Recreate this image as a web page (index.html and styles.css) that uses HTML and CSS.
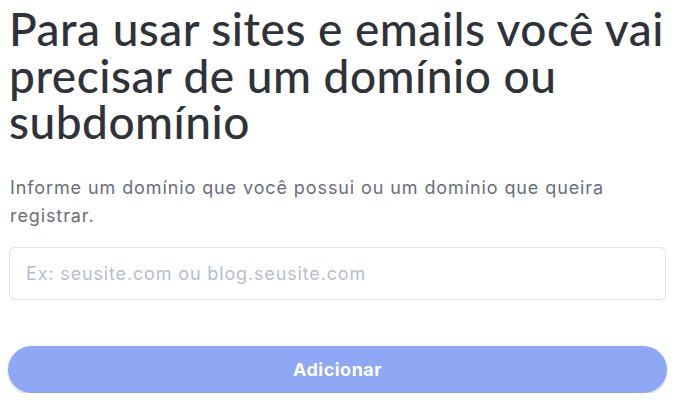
FILE: index.html
```html
<!DOCTYPE html>
<html lang="pt-BR">
<head>
<meta charset="utf-8">
<link rel="stylesheet" href="styles.css">
</head>
<body>
<main class="panel">
  <h1 class="title">Para usar sites e emails você vai precisar de um domínio ou subdomínio</h1>
  <p class="lead">Informe um domínio que você possui ou um domínio que queira registrar.</p>
  <input class="field" type="text" placeholder="Ex: seusite.com ou blog.seusite.com">
  <button class="btn" type="button">Adicionar</button>
</main>
</body>
</html>
```
FILE: styles.css
```css
html, body {
  margin: 0;
  background: #ffffff;
}
.panel {
  display: flex;
  flex-direction: column;
  padding: 6px 9px 0 9px;
  font-family: "Lato", "Noto Sans", sans-serif;
}
.title {
  margin: 0;
  font-family: "Lato", "Noto Sans", sans-serif;
  font-size: 46px;
  line-height: 46.5px;
  font-weight: 500;
  color: #2f3238;
  letter-spacing: 0.5px;
}
.lead {
  margin: 28px 0 0 1px;
  font-family: "Inter", "Noto Sans", sans-serif;
  font-size: 18px;
  line-height: 28px;
  letter-spacing: 0.9px;
  color: #6b6e78;
}
.field {
  margin-top: 17px;
  height: 53px;
  box-sizing: border-box;
  border: 1.5px solid #dde1ee;
  border-radius: 6px;
  padding: 0 16px;
  font-family: "Inter", "Noto Sans", sans-serif;
  font-size: 18px;
  letter-spacing: 0.85px;
  color: #2f3238;
  outline: none;
}
.field::placeholder {
  color: #b9bdcb;
}
.btn {
  margin: 46px -1px 0 -1px;
  height: 47px;
  border: 0;
  border-radius: 24px;
  background: #8fa8f6;
  color: #ffffff;
  font-family: "Inter", "Roboto", sans-serif;
  font-weight: 700;
  font-size: 18px;
  letter-spacing: 0.5px;
  box-shadow: 0 2px 3px rgba(40, 50, 80, 0.18);
  cursor: pointer;
}
```
